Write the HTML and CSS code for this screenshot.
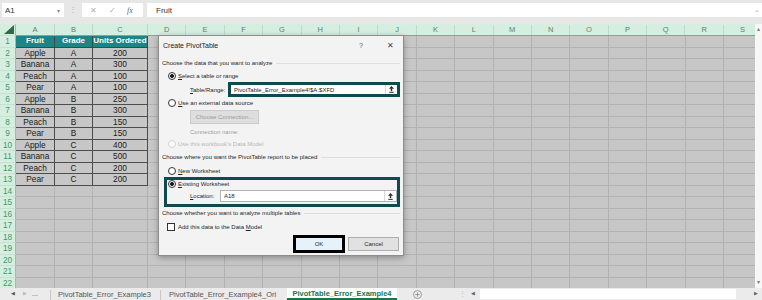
FILE: index.html
```html
<!DOCTYPE html>
<html lang="en">
<head>
    <meta charset="UTF-8">
    <title>PivotTable_Error_Example4 - Excel</title>
    <link rel="stylesheet" href="styles.css">
</head>
<body>
    <div class="app">
        <div class="formula-bar">
            <div class="name-box">A1<span class="caret">▾</span></div>
            <div class="fb-dots">⋮</div>
            <div class="fb-icons">
                <span class="fb-x">✕</span>
                <span class="fb-ok">✓</span>
                <span class="fb-fx">fx</span>
            </div>
            <div class="fb-input">Fruit<span class="fb-expand">⌄</span></div>
        </div>

        <div class="main">
            <table class="sheet">
                <colgroup>
                    <col class="c-num"><col class="c-a"><col class="c-b"><col class="c-c"><col>
                </colgroup>
                <tr class="col-head">
                    <th class="corner"><svg width="10" height="9" viewBox="0 0 10 9"><polygon points="10,0 10,9 0,9" fill="#2f6a4a"/></svg></th>
                    <th>A</th><th>B</th><th>C</th>
                    <th class="rest"><div class="letters"><span>D</span><span>E</span><span>F</span><span>G</span><span>H</span><span>I</span><span>J</span><span>K</span><span>L</span><span>M</span><span>N</span><span>O</span><span>P</span><span>Q</span><span>R</span><span>S</span></div></th>
                </tr>
                <tr><th>1</th><td class="t-head">Fruit</td><td class="t-head">Grade</td><td class="t-head">Units Ordered</td><td class="rest"></td></tr>
                <tr><th>2</th><td class="t-cell">Apple</td><td class="t-cell">A</td><td class="t-cell">200</td><td class="rest"></td></tr>
                <tr><th>3</th><td class="t-cell">Banana</td><td class="t-cell">A</td><td class="t-cell">300</td><td class="rest"></td></tr>
                <tr><th>4</th><td class="t-cell">Peach</td><td class="t-cell">A</td><td class="t-cell">100</td><td class="rest"></td></tr>
                <tr><th>5</th><td class="t-cell">Pear</td><td class="t-cell">A</td><td class="t-cell">100</td><td class="rest"></td></tr>
                <tr><th>6</th><td class="t-cell">Apple</td><td class="t-cell">B</td><td class="t-cell">250</td><td class="rest"></td></tr>
                <tr><th>7</th><td class="t-cell">Banana</td><td class="t-cell">B</td><td class="t-cell">300</td><td class="rest"></td></tr>
                <tr><th>8</th><td class="t-cell">Peach</td><td class="t-cell">B</td><td class="t-cell">150</td><td class="rest"></td></tr>
                <tr><th>9</th><td class="t-cell">Pear</td><td class="t-cell">B</td><td class="t-cell">150</td><td class="rest"></td></tr>
                <tr><th>10</th><td class="t-cell">Apple</td><td class="t-cell">C</td><td class="t-cell">400</td><td class="rest"></td></tr>
                <tr><th>11</th><td class="t-cell">Banana</td><td class="t-cell">C</td><td class="t-cell">500</td><td class="rest"></td></tr>
                <tr><th>12</th><td class="t-cell">Peach</td><td class="t-cell">C</td><td class="t-cell">200</td><td class="rest"></td></tr>
                <tr><th>13</th><td class="t-cell">Pear</td><td class="t-cell">C</td><td class="t-cell">200</td><td class="rest"></td></tr>
                <tr><th>14</th><td></td><td></td><td></td><td class="rest"></td></tr>
                <tr><th>15</th><td></td><td></td><td></td><td class="rest"></td></tr>
                <tr><th>16</th><td></td><td></td><td></td><td class="rest"></td></tr>
                <tr><th>17</th><td></td><td></td><td></td><td class="rest"></td></tr>
                <tr><th>18</th><td></td><td></td><td></td><td class="rest"></td></tr>
                <tr><th>19</th><td></td><td></td><td></td><td class="rest"></td></tr>
                <tr><th>20</th><td></td><td></td><td></td><td class="rest"></td></tr>
                <tr><th>21</th><td></td><td></td><td></td><td class="rest"></td></tr>
                <tr><th>22</th><td></td><td></td><td></td><td class="rest"></td></tr>
            </table>
            <div class="vscroll"><span>▴</span><span>▾</span></div>
        </div>

        <div class="tabs">
            <div class="tab-nav"><span class="nav-prev">◀</span><span class="nav-next">▶</span><span class="nav-more">...</span></div>
            <div class="tab tab-1">PivotTable_Error_Example3</div>
            <div class="tab tab-2">PivotTable_Error_Example4_Ori</div>
            <div class="tab active">PivotTable_Error_Example4</div>
            <div class="tab-add">
                <svg width="9" height="9" viewBox="0 0 9 9"><circle cx="4.5" cy="4.5" r="4" fill="none" stroke="#8a8a8a" stroke-width="0.8"/><path d="M4.5 2.3v4.4M2.3 4.5h4.4" stroke="#8a8a8a" stroke-width="0.8"/></svg>
            </div>
            <div class="hscroll">
                <span class="hs-dots">⋮</span>
                <span class="hs-prev">◀</span>
                <div class="hs-track"></div>
                <span class="hs-next">▶</span>
            </div>
        </div>
    </div>

    <div class="dialog">
        <div class="dlg-title">
            <span class="dlg-name">Create PivotTable</span>
            <span class="dlg-help">?</span>
            <span class="dlg-close">✕</span>
        </div>
        <div class="dlg-body">
            <div class="dlg-heading">Choose the data that you want to analyze</div>
            <div class="opt opt-1"><span class="radio checked"></span><span><u>S</u>elect a table or range</span></div>
            <div class="field">
                <span class="field-label range-label"><u>T</u>able/Range:</span>
                <div class="input range-input">
                    <span class="input-text">PivotTable_Error_Example4!$A:$XFD</span>
                    <span class="collapse-btn"><svg width="5" height="7" viewBox="0 0 5 7"><polygon points="2.5,0 5,2.8 0,2.8" fill="#222"/><rect x="1.8" y="2.6" width="1.4" height="2.4" fill="#222"/><rect x="0.3" y="5.8" width="4.4" height="1" fill="#222"/></svg></span>
                </div>
            </div>
            <div class="opt opt-2"><span class="radio"></span><span><u>U</u>se an external data source</span></div>
            <div class="conn-btn">Choose Connection...</div>
            <div class="conn-name">Connection name:</div>
            <div class="opt opt-3 disabled"><span class="radio"></span><span>Use this workbook's Data Model</span></div>

            <div class="dlg-heading heading-2">Choose where you want the PivotTable report to be placed</div>
            <div class="opt opt-4"><span class="radio"></span><span><u>N</u>ew Worksheet</span></div>
            <div class="place-box">
                <div class="opt opt-5"><span class="radio checked"></span><span><u>E</u>xisting Worksheet</span></div>
                <div class="field location">
                    <span class="field-label loc-label"><u>L</u>ocation:</span>
                    <div class="input loc-input">
                        <span class="input-text">A18</span>
                        <span class="collapse-btn"><svg width="5" height="7" viewBox="0 0 5 7"><polygon points="2.5,0 5,2.8 0,2.8" fill="#222"/><rect x="1.8" y="2.6" width="1.4" height="2.4" fill="#222"/><rect x="0.3" y="5.8" width="4.4" height="1" fill="#222"/></svg></span>
                    </div>
                </div>
            </div>

            <div class="dlg-heading heading-3">Choose whether you want to analyze multiple tables</div>
            <div class="check-row"><span class="checkbox"></span><span>Add this data to the Data <u>M</u>odel</span></div>

            <div class="dlg-buttons">
                <div class="btn btn-ok">OK</div>
                <div class="btn btn-cancel">Cancel</div>
            </div>
        </div>
    </div>
</body>
</html>
```

FILE: styles.css
```css
body {
    margin: 0;
    width: 762px;
    height: 300px;
    overflow: hidden;
    position: relative;
    font-family: "Liberation Sans", Arial, sans-serif;
    background-color: #e7e7e7;
    color: #222;
}

.app {
    display: flex;
    flex-direction: column;
    height: 300px;
}

/* formula bar */
.formula-bar {
    height: 14px;
    padding: 3px 0 7px 0;
    display: flex;
    background-color: #e7e7e7;
    font-size: 8px;
}

.name-box {
    width: 62px;
    margin-left: 2px;
    background-color: #fff;
    display: flex;
    align-items: center;
    padding-left: 3px;
    box-sizing: border-box;
    color: #333;
}

.name-box .caret {
    margin-left: auto;
    margin-right: 4px;
    font-size: 6px;
    color: #888;
}

.fb-dots {
    width: 18px;
    text-align: center;
    color: #b5b5b5;
    font-size: 8px;
    line-height: 14px;
}

.fb-icons {
    width: 61px;
    background-color: #fff;
    display: flex;
    align-items: center;
    color: #b0b0b0;
}

.fb-x {
    margin-left: 8px;
    font-size: 8px;
}

.fb-ok {
    margin-left: 12px;
    font-size: 8px;
}

.fb-fx {
    margin-left: 11px;
    font-family: "Liberation Serif", serif;
    font-style: italic;
    color: #666;
    font-size: 8px;
}

.fb-input {
    flex: 1;
    margin-left: 4px;
    background-color: #fff;
    display: flex;
    align-items: center;
    padding-left: 9px;
    color: #333;
}

.fb-expand {
    margin-left: auto;
    margin-right: 2px;
    color: #aaa;
    font-size: 7px;
}

/* sheet */
.main {
    height: 264px;
    display: flex;
    overflow: hidden;
}

.sheet {
    width: 755px;
    table-layout: fixed;
    border-collapse: separate;
    border-spacing: 0;
    font-size: 8.3px;
    flex: none;
}

.c-num { width: 16px; }
.c-a { width: 39px; }
.c-b { width: 38px; }
.c-c { width: 55px; }

.sheet tr {
    height: 11.5px;
}

.sheet tr.col-head {
    height: 12px;
}

.sheet td,
.sheet th {
    padding: 0;
    border: 0;
    border-right: 1px solid #b2b2b2;
    border-bottom: 1px solid #b2b2b2;
    background-color: #c7c7c7;
    font-weight: normal;
    line-height: 10px;
    white-space: nowrap;
    overflow: hidden;
    text-align: center;
}

.sheet tr th:first-child {
    background-color: #d5eee0;
    color: #3f9a68;
    border-right: 1px solid #8cc7a4;
    border-bottom: 1px solid #c4e2d0;
}

.col-head th {
    background-color: #d5eee0;
    color: #5f7f6d;
    font-size: 7.5px;
    border-bottom: 1px solid #6cb38a;
    border-right: 1px solid #bcdcc9;
}

.col-head th.corner {
    background-color: #dfe7e2;
    border-bottom: 1px solid #6cb38a;
    text-align: right;
    vertical-align: bottom;
}

.corner svg {
    display: block;
    margin: 0 1px 1px auto;
}

.col-head th.rest {
    border-right: 0;
    text-align: left;
}

.letters {
    display: flex;
}

.letters span {
    flex: none;
    width: 38.4px;
    box-sizing: border-box;
    border-right: 1px solid #bcdcc9;
    text-align: center;
}

.sheet td.rest {
    border-right: 0;
    background: #c7c7c7 repeating-linear-gradient(to right, transparent 0 37.4px, #b2b2b2 37.4px 38.4px);
}

.sheet td.t-head {
    background-color: #1d8585;
    color: #fff;
    font-weight: bold;
    font-size: 8px;
    border-right: 1px solid #3a4a4a;
    border-bottom: 1px solid #3a4a4a;
}

.sheet td.t-cell {
    color: #1a1a1a;
    border-right: 1px solid #4d4d4d;
    border-bottom: 1px solid #4d4d4d;
}

.vscroll {
    width: 7px;
    background-color: #f7f7f7;
    display: flex;
    flex-direction: column;
    justify-content: space-between;
    align-items: center;
    padding: 2px 0 3px;
    box-sizing: border-box;
    font-size: 6px;
    color: #777;
    line-height: 6px;
}

/* sheet tabs */
.tabs {
    height: 12px;
    display: flex;
    align-items: stretch;
    background-color: #ebebeb;
    font-size: 7.5px;
    color: #555;
    line-height: 12px;
}

.tab-nav {
    width: 50px;
    display: flex;
    align-items: center;
    font-size: 4.5px;
    box-sizing: border-box;
    padding-left: 11px;
}

.nav-prev { color: #555; }
.nav-next { color: #bbb; margin-left: 8px; }
.nav-more { color: #555; font-size: 7px; margin-left: 5px; }

.tab {
    box-sizing: border-box;
    white-space: nowrap;
}

.tab-1 {
    width: 110px;
    padding-left: 7px;
    border-left: 1px solid #c8c8c8;
    margin-top: 2px;
    line-height: 9px;
}

.tab-2 {
    width: 127px;
    padding-left: 8px;
    border-left: 1px solid #c8c8c8;
    margin-top: 2px;
    line-height: 9px;
}

.tab.active {
    width: 110px;
    background-color: #fff;
    color: #217346;
    font-weight: bold;
    text-align: center;
    border-bottom: 2px solid #217346;
    line-height: 11px;
}

.tab-add {
    width: 40px;
    display: flex;
    align-items: center;
    justify-content: center;
}

.tab-add svg {
    display: block;
}

.hscroll {
    margin-left: auto;
    width: 305px;
    display: flex;
    align-items: center;
    font-size: 4.5px;
    color: #666;
}

.hs-dots {
    font-size: 7px;
    color: #b8b8b8;
    margin-left: 2px;
}

.hs-prev {
    margin-left: 5px;
}

.hs-track {
    width: 256px;
    height: 10px;
    margin-left: 5px;
    background-color: #fff;
}

.hs-next {
    margin-left: 18px;
}

/* dialog */
.dialog {
    position: absolute;
    left: 158px;
    top: 35px;
    width: 246px;
    height: 221px;
    box-sizing: border-box;
    background-color: #f3f3f3;
    border: 1px solid #8d8d8d;
    box-shadow: 0 2px 6px rgba(0, 0, 0, 0.3);
    font-size: 6px;
    color: #262626;
}

.dlg-title {
    height: 19px;
    display: flex;
    align-items: center;
    padding-left: 4px;
}

.dlg-name {
    font-size: 7px;
    color: #222;
}

.dlg-help {
    margin-left: auto;
    width: 10px;
    text-align: center;
    font-size: 7px;
    color: #555;
}

.dlg-close {
    width: 12px;
    margin-left: 18px;
    margin-right: 7px;
    text-align: center;
    font-size: 8px;
    color: #444;
}

.dlg-body {
    padding: 0 3px 0 3px;
}

.dlg-heading {
    height: 12px;
    margin-top: 2px;
    display: flex;
    align-items: center;
    white-space: nowrap;
}

.dlg-heading::after {
    content: "";
    flex: 1;
    height: 1px;
    margin-left: 4px;
    background-color: #dedede;
}

.opt {
    display: flex;
    align-items: center;
    padding-left: 6px;
    height: 12px;
}

.opt-1 { margin-top: 1px; }
.opt-3 { height: 11px; }
.opt-4 { margin-top: 2px; }

.opt.disabled {
    color: #b8b8b8;
}

.radio {
    width: 8px;
    height: 8px;
    box-sizing: border-box;
    border: 1px solid #333;
    border-radius: 50%;
    background-color: #fff;
    margin-right: 2px;
}

.radio.checked {
    background: radial-gradient(circle, #1f1f1f 0 1.7px, #fff 2.2px);
}

.opt.disabled .radio {
    border-color: #d2d2d2;
}

.field {
    display: flex;
    align-items: center;
    height: 15px;
}

.field-label {
    white-space: nowrap;
}

.range-label {
    margin-left: 28px;
    width: 38px;
}

.input {
    flex: 1;
    display: flex;
    align-items: center;
    background-color: #fff;
    box-sizing: border-box;
    height: 100%;
}

.range-input {
    border: 3px solid #0f4a50;
}

.input-text {
    padding-left: 3px;
    white-space: nowrap;
}

.collapse-btn {
    margin-left: auto;
    width: 11px;
    height: 100%;
    border-left: 1px solid #d8d8d8;
    display: flex;
    align-items: center;
    justify-content: center;
}

.collapse-btn svg {
    display: block;
}

.conn-btn {
    margin: 1px 0 0 28px;
    width: 69px;
    height: 14px;
    box-sizing: border-box;
    border: 1px solid #cbcbcb;
    background-color: #dedede;
    color: #9b9b9b;
    text-align: center;
    line-height: 12px;
}

.conn-name {
    margin: 2px 0 0 28px;
    height: 12px;
    line-height: 12px;
    color: #9b9b9b;
}

.heading-2 {
    margin-top: 2px;
}

.place-box {
    margin-left: 2px;
    height: 30px;
    box-sizing: border-box;
    border: 3px solid #0f4a50;
}

.opt-5 {
    height: 8px;
    padding-left: 1px;
}

.location {
    height: 16px;
}

.loc-label {
    margin-left: 23px;
    width: 30px;
}

.loc-input {
    height: 12px;
    border: 1px solid #b3b3b3;
}

.heading-3 {
    margin-top: 0;
}

.check-row {
    display: flex;
    align-items: center;
    height: 13px;
    margin-top: 1px;
    padding-left: 5px;
}

.checkbox {
    width: 8px;
    height: 8px;
    box-sizing: border-box;
    border: 1px solid #333;
    background-color: #fff;
    margin-right: 3px;
}

.dlg-buttons {
    display: flex;
    align-items: center;
    justify-content: flex-end;
    gap: 3px;
    margin-top: 2px;
    padding-right: 1px;
    height: 18px;
}

.btn {
    box-sizing: border-box;
    text-align: center;
}

.btn-ok {
    width: 52px;
    height: 18px;
    border: 3px solid #000;
    background-color: #e5f1fb;
    line-height: 12px;
}

.btn-cancel {
    width: 51px;
    height: 14px;
    border: 1px solid #adadad;
    background-color: #e1e1e1;
    line-height: 12px;
}
```
